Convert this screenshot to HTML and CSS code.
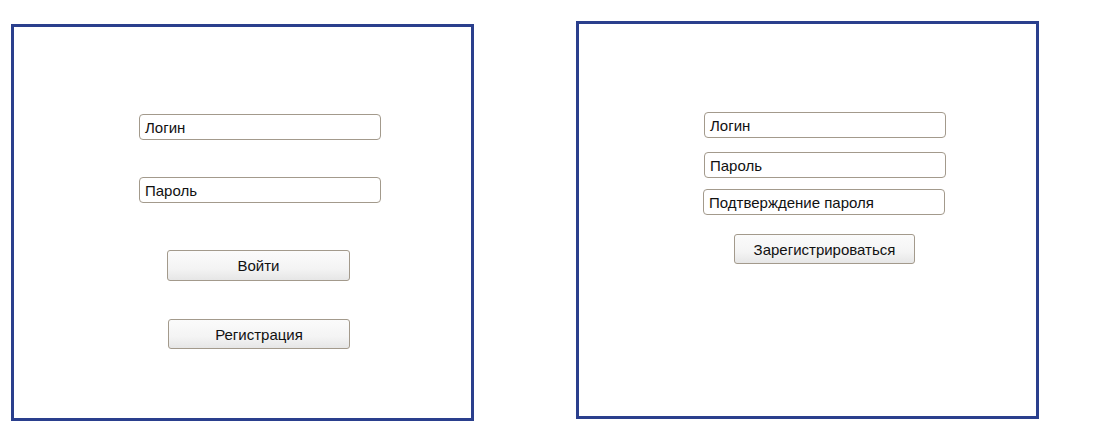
FILE: index.html
```html
<!DOCTYPE html>
<html>
<head>
<meta charset="utf-8">
<link rel="stylesheet" href="styles.css">
</head>
<body>
<div class="page">
  <div class="panel panel-login">
    <div class="field f-login">Логин</div>
    <div class="field f-pass">Пароль</div>
    <div class="btn b-enter">Войти</div>
    <div class="btn b-reg">Регистрация</div>
  </div>
  <div class="panel panel-register">
    <div class="field r-login">Логин</div>
    <div class="field r-pass">Пароль</div>
    <div class="field r-confirm">Подтверждение пароля</div>
    <div class="btn r-btn">Зарегистрироваться</div>
  </div>
</div>
</body>
</html>
```
FILE: styles.css
```css
html, body {
  margin: 0;
  padding: 0;
  background: #ffffff;
}
.page {
  display: flex;
  align-items: flex-start;
  font-family: "Liberation Sans", Arial, sans-serif;
  font-size: 15px;
  color: #111;
}
.panel {
  box-sizing: border-box;
  width: 463px;
  border: 3px solid #2a3f8d;
  display: flex;
  flex-direction: column;
  align-items: flex-start;
}
.panel-login {
  margin-left: 11px;
  margin-top: 24px;
  height: 397px;
}
.panel-register {
  margin-left: 102px;
  margin-top: 21px;
  height: 398px;
}
.field {
  box-sizing: border-box;
  width: 242px;
  height: 26px;
  border: 1.5px solid #a39a8c;
  border-radius: 4px;
  padding-left: 5px;
  padding-top: 1px;
  line-height: 23px;
  background: #fff;
  white-space: nowrap;
}
.btn {
  box-sizing: border-box;
  border: 1.5px solid #a39a8c;
  border-radius: 3px;
  background: linear-gradient(#fbfbfb, #f4f4f4 60%, #e6e6e6);
  text-align: center;
  white-space: nowrap;
  padding-top: 1px;
}
.f-login { margin: 87px 0 0 125px; }
.f-pass { margin: 37px 0 0 125px; }
.b-enter { margin: 47px 0 0 153px; width: 183px; height: 31px; line-height: 28px; }
.b-reg { margin: 38px 0 0 154px; width: 182px; height: 30px; line-height: 27px; }
.r-login { margin: 88px 0 0 125px; }
.r-pass { margin: 14px 0 0 125px; }
.r-confirm { margin: 11px 0 0 124px; }
.r-btn { margin: 19px 0 0 155px; width: 181px; height: 30px; line-height: 27px; }
```
